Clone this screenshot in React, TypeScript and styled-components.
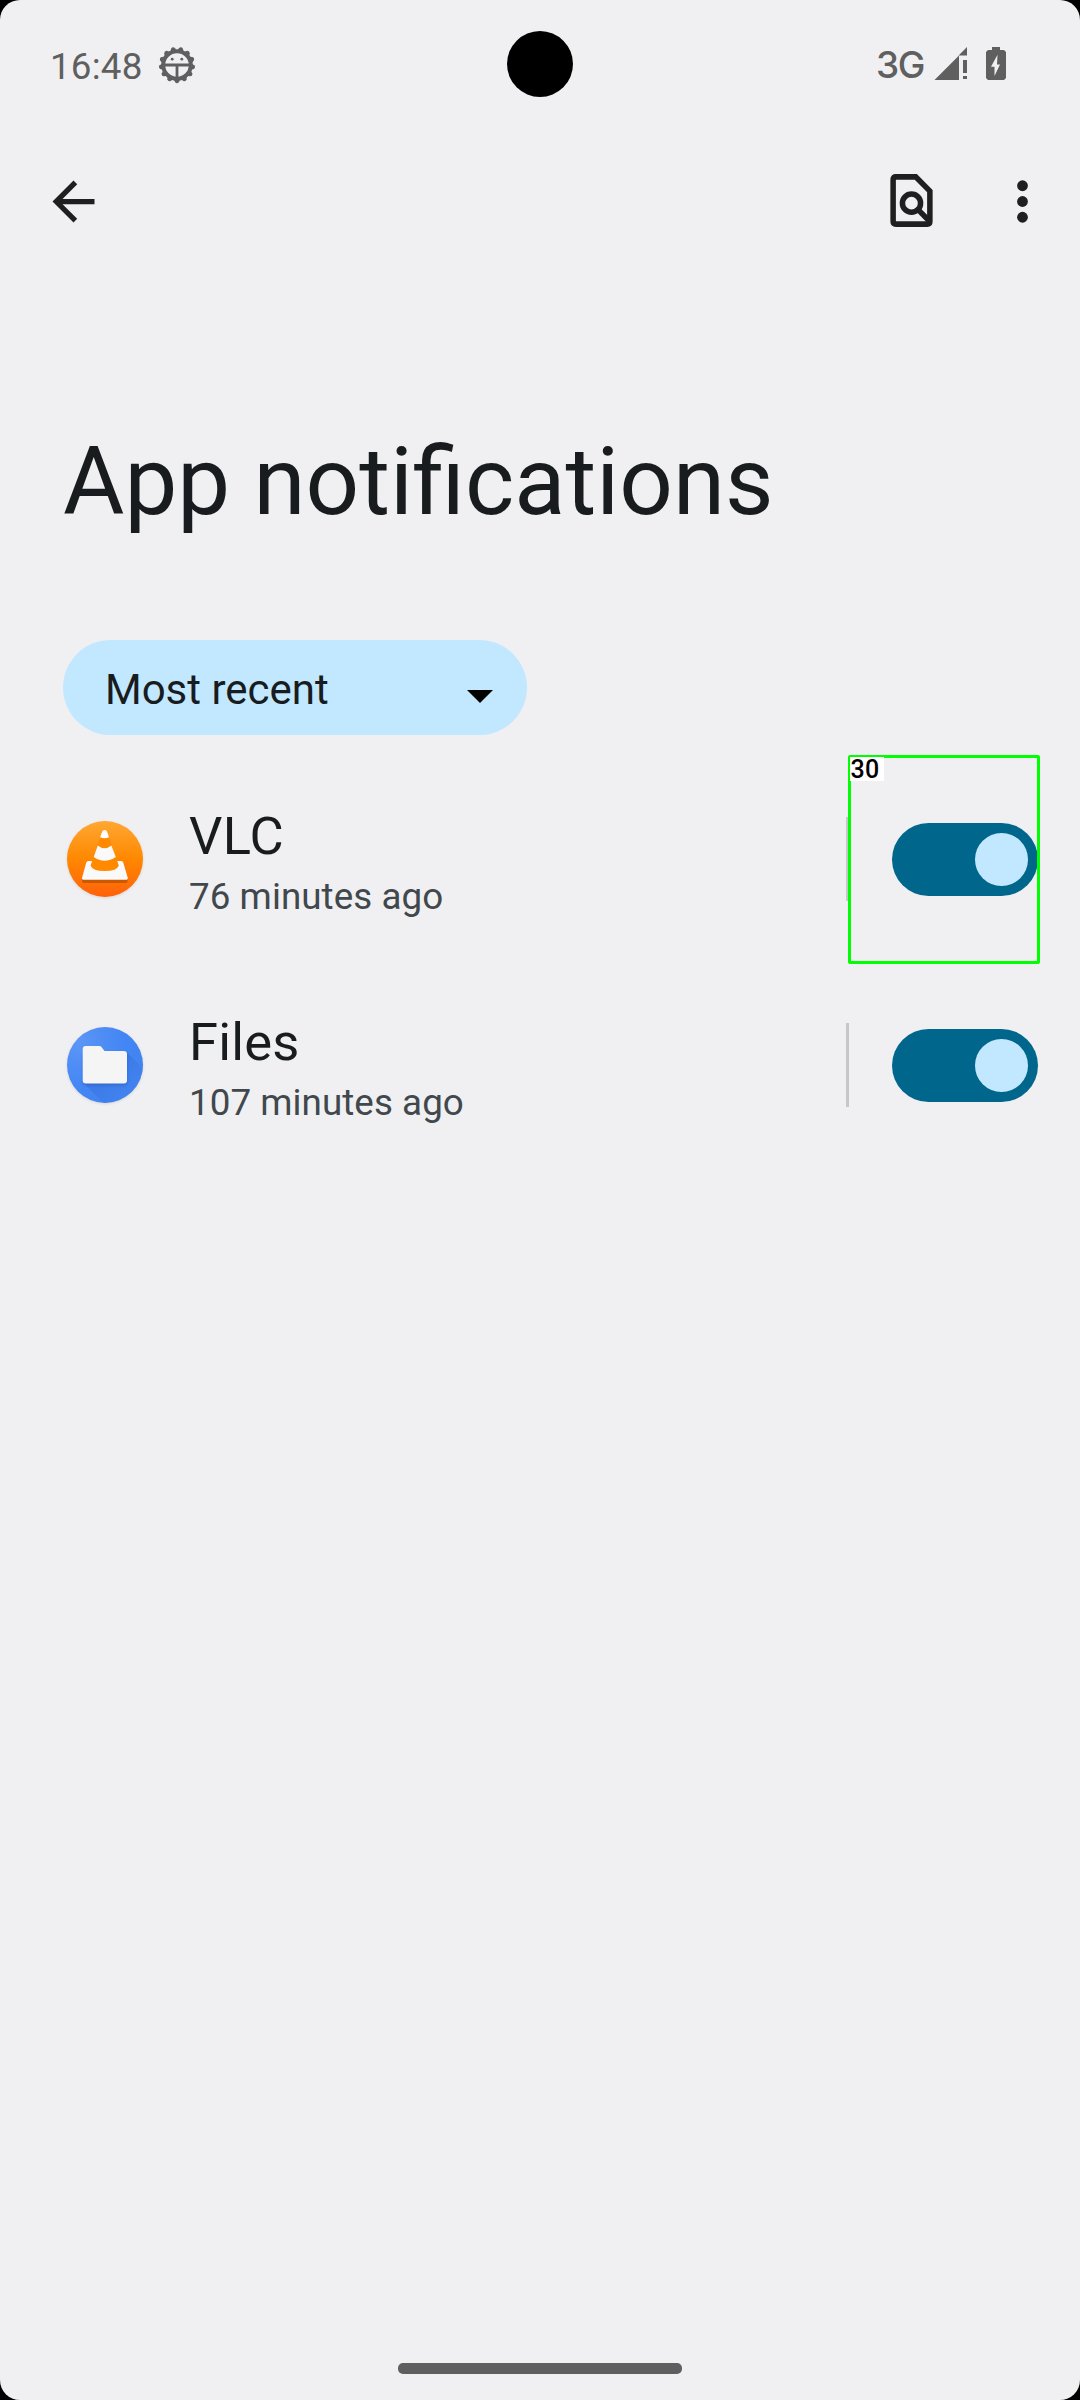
import React, { useState } from "react";
import styled, { createGlobalStyle } from "styled-components";

const GlobalStyle = createGlobalStyle`
  * { box-sizing: border-box; }
  html, body { margin: 0; padding: 0; background: #000; }
  button { border: 0; padding: 0; background: none; font: inherit; color: inherit; }
  svg { display: block; }
`;

const Screen = styled.div`
  position: relative;
  display: flex;
  flex-direction: column;
  width: 1080px;
  height: 2400px;
  border-radius: 20px;
  overflow: hidden;
  background: #f0f0f2;
  color: #191c1e;
  font-family: Roboto, "Noto Sans", sans-serif;
`;

const StatusBar = styled.header`
  display: flex;
  align-items: center;
  height: 127px;
  padding: 0 74px 0 50px;
  color: #5f5f5f;
`;

const Clock = styled.span`
  width: 93px;
  font-size: 36.75px;
  line-height: 44px;
  letter-spacing: 0.2px;
  margin-top: 7px;
`;

const DebugIcon = styled.svg`
  margin: 3px 0 0 15px;
`;

const StatusIcons = styled.div`
  display: flex;
  align-items: center;
  margin-left: auto;
`;

const Network = styled.span`
  font-family: Inter, Roboto, sans-serif;
  font-size: 37px;
  line-height: 45px;
  font-weight: 500;
  letter-spacing: -1.4px;
  margin: 2px 10px 0 0;
`;

const Battery = styled.svg`
  margin-left: 19px;
`;

const Camera = styled.div`
  position: absolute;
  left: 507px;
  top: 31px;
  width: 66px;
  height: 66px;
  border-radius: 50%;
  background: #000;
`;

const Toolbar = styled.nav`
  display: flex;
  align-items: center;
  height: 149px;
  padding: 0 26px 0 42px;
  color: #1f1f1f;
`;

const IconButton = styled.button<{ $push?: boolean; $gap?: number }>`
  width: 63px;
  height: 63px;
  margin-top: ${(p) => (p.$push ? "-2px" : "0")};
  margin-left: ${(p) => (p.$push ? "auto" : `${p.$gap ?? 0}px`)};
`;

const Title = styled.h1`
  margin: 150px 0 0 63px;
  font-size: 94.15px;
  line-height: 112px;
  font-weight: 400;
`;

const Filter = styled.button`
  display: flex;
  align-items: center;
  justify-content: space-between;
  width: 464px;
  height: 95px;
  margin: 102px 0 21px 63px;
  padding: 0 34px 0 42px;
  border-radius: 48px;
  background: #c2e8ff;
  color: #191c1e;
`;

const FilterLabel = styled.span`
  font-size: 42px;
  line-height: 50px;
  margin-top: 5px;
`;

const Caret = styled.svg`
  margin-top: 18px;
`;

const List = styled.ul`
  list-style: none;
  margin: 0;
  padding: 0;
`;

const Row = styled.li`
  position: relative;
  display: flex;
  align-items: center;
  height: 206px;
  padding: 0 42px 0 61px;
`;

const AppIcon = styled.svg`
  width: 88px;
  height: 88px;
  overflow: visible;
`;

const Labels = styled.div`
  display: flex;
  flex-direction: column;
  flex: 1;
  margin-left: 40px;
  padding-top: 4px;
`;

const Name = styled.span`
  font-size: 52.5px;
  line-height: 62px;
  letter-spacing: 0.2px;
`;

const Age = styled.span`
  font-size: 36.75px;
  line-height: 43px;
  letter-spacing: 0.06px;
  margin-top: 8px;
  color: #41484d;
`;

const Divider = styled.div`
  width: 3px;
  height: 84px;
  background: #c7c7c7;
`;

const Track = styled.button<{ $on: boolean }>`
  display: flex;
  align-items: center;
  justify-content: ${(p) => (p.$on ? "flex-end" : "flex-start")};
  width: 146px;
  height: 73px;
  margin: 1px 0 0 43px;
  padding: 0 10px;
  border-radius: 37px;
  background: ${(p) => (p.$on ? "#00668b" : "#dce3e9")};
`;

const Thumb = styled.span`
  width: 53px;
  height: 53px;
  border-radius: 50%;
  background: #c2e8ff;
`;

const Marker = styled.div`
  position: absolute;
  left: 848px;
  top: -1px;
  width: 192px;
  height: 209px;
  border: 3px solid #00ff00;
  border-radius: 2px;
  pointer-events: none;
`;

const MarkerTag = styled.span`
  position: absolute;
  left: -1px;
  top: -1px;
  width: 34px;
  height: 24px;
  padding-left: 0.5px;
  background: #fff;
  color: #000;
  font-size: 25px;
  font-weight: 500;
  line-height: 26px;
  letter-spacing: 0.3px;
`;

const Handle = styled.div`
  width: 284px;
  height: 11px;
  margin: auto auto 26px;
  border-radius: 5px;
  background: #5f5f5f;
`;

const teeth = Array.from({ length: 13 }, (_, i) => 90 + (i * 360) / 13);

const VlcIcon = () => (
  <AppIcon viewBox="-6 -6 88 88">
    <defs>
      <linearGradient id="vlcBg" x1="0" y1="0" x2="0" y2="1">
        <stop offset="0" stopColor="#ffa733" />
        <stop offset="0.5" stopColor="#ff8800" />
        <stop offset="1" stopColor="#ff610a" />
      </linearGradient>
      <filter id="soft" x="-20%" y="-20%" width="140%" height="140%">
        <feGaussianBlur stdDeviation="1.6" />
      </filter>
    </defs>
    <circle cx="38" cy="39" r="38" fill="#000" opacity="0.1" filter="url(#soft)" />
    <circle cx="38" cy="38" r="38" fill="url(#vlcBg)" />
    <path d="M15 58h45.6v2q0 2-2 2H17q-2 0-2-2z" fill="#c95a02" />
    <path d="M21.4 40H54q1.8 0 2.3 1.8L60.8 57q.4 1.8-1.4 1.8H16.4q-1.8 0-1.4-1.8l4.2-15.2q.5-1.8 2.2-1.8z" fill="#fafafa" />
    <path d="M33.4 16 Q37.6 18 41.8 16 L51.8 44.5 Q50 50 37.6 50 Q25.5 50 23.6 44.5z" fill="#ff8a00" />
    <path d="M33.2 16.3 L34.8 11.4 Q35.5 9 37.6 9 Q39.7 9 40.4 11.4 L42 16.3 Q37.6 18 33.2 16.3z" fill="#fff" />
    <path d="M30.8 24.5 Q37.6 30 44.4 24.5 L48.8 36 Q37.6 43.5 26.7 36z" fill="#fafafa" />
  </AppIcon>
);

const FilesIcon = () => (
  <AppIcon viewBox="-6 -6 88 88">
    <defs>
      <radialGradient id="filesBg" cx="0.15" cy="0.2" r="0.9">
        <stop offset="0" stopColor="#5c96f6" />
        <stop offset="0.7" stopColor="#4285f4" />
        <stop offset="1" stopColor="#4285f0" />
      </radialGradient>
      <linearGradient id="cast" x1="0" y1="0" x2="1" y2="1">
        <stop offset="0.4" stopColor="#3b74df" stopOpacity="0.6" />
        <stop offset="0.85" stopColor="#4285f4" stopOpacity="0.1" />
      </linearGradient>
      <clipPath id="disc">
        <circle cx="38" cy="38" r="38" />
      </clipPath>
      <filter id="softFiles" x="-20%" y="-20%" width="140%" height="140%">
        <feGaussianBlur stdDeviation="1.6" />
      </filter>
    </defs>
    <circle cx="38" cy="39" r="38" fill="#000" opacity="0.1" filter="url(#softFiles)" />
    <circle cx="38" cy="38" r="38" fill="url(#filesBg)" />
    <g clipPath="url(#disc)">
      <path d="M59.5 25 L84 49 V90 H50 L16.5 56z" fill="url(#cast)" />
      <rect x="16" y="26" width="44" height="32" rx="3" fill="#1c4ba8" opacity="0.45" filter="url(#softFiles)" />
    </g>
    <path d="M18.7 19H32.5q1.2 0 2 1l3 4H57q3 0 3 3v26.5q0 3-3 3H18.7q-3 0-3-3V22q0-3 3-3z" fill="#f5f5f5" />
  </AppIcon>
);

type Item = { name: string; age: string; icon: React.ReactNode; tag?: string };

const items: Item[] = [
  { name: "VLC", age: "76 minutes ago", icon: <VlcIcon />, tag: "30" },
  { name: "Files", age: "107 minutes ago", icon: <FilesIcon /> },
];

function AppRow({ item }: { item: Item }) {
  const [on, setOn] = useState(true);
  return (
    <Row>
      {item.icon}
      <Labels>
        <Name>{item.name}</Name>
        <Age>{item.age}</Age>
      </Labels>
      <Divider />
      <Track $on={on} role="switch" aria-checked={on} onClick={() => setOn(!on)}>
        <Thumb />
      </Track>
      {item.tag && (
        <Marker>
          <MarkerTag>{item.tag}</MarkerTag>
        </Marker>
      )}
    </Row>
  );
}

export default function App() {
  return (
    <>
      <GlobalStyle />
      <Screen>
        <StatusBar>
          <Clock>16:48</Clock>
          <DebugIcon width="38" height="38" viewBox="-19 -19 38 38">
            {teeth.map((a) => (
              <path key={a} d="M13 -3.8 L17.2 -1.9 Q19.2 0 17.2 1.9 L13 3.8z" fill="#5f5f5f" transform={`rotate(${a})`} />
            ))}
            <circle r="13.8" fill="none" stroke="#5f5f5f" strokeWidth="4" />
            <path d="M-13 0H13M0 0V13" stroke="#5f5f5f" strokeWidth="2.8" />
            <circle cx="-4.8" cy="-5.8" r="1.4" fill="#5f5f5f" />
            <circle cx="4.8" cy="-5.8" r="1.4" fill="#5f5f5f" />
          </DebugIcon>
          <StatusIcons>
            <Network>3G</Network>
            <svg width="33" height="33" viewBox="0 0 33 33" fill="#5f5f5f">
              <path d="M0.5 33 L25 8.5V33zM33 0V8.5H24.5zM29 13h4v13h-4zM29 29h4v3h-4z" />
            </svg>
            <Battery width="20" height="33" viewBox="0 0 20 33">
              <path
                d="M6 0h8v3h4l2 2v26l-2 2H2l-2-2V5l2-2h4zM11.5 7.7 L5 19.7h3.5V29L14 17.5h-3z"
                fill="#5f5f5f"
                fillRule="evenodd"
              />
            </Battery>
          </StatusIcons>
        </StatusBar>
        <Camera />
        <Toolbar>
          <IconButton aria-label="Back">
            <svg width="63" height="63" viewBox="0 0 24 24" fill="currentColor">
              <path d="M20 11H7.83l5.59-5.59L12 4l-8 8 8 8 1.41-1.41L7.83 13H20v-2z" />
            </svg>
          </IconButton>
          <IconButton $push aria-label="Search">
            <svg width="63" height="63" viewBox="0 0 24 24" fill="none" stroke="currentColor" strokeWidth="2.1">
              <path d="M6 3H13.6L19 8.4V20q0 1-1 1H6q-1 0-1-1V4q0-1 1-1z" />
              <circle cx="12" cy="13" r="3.45" />
              <path d="M14.4 15.4L18.6 19.6" />
            </svg>
          </IconButton>
          <IconButton $gap={48} aria-label="More options">
            <svg width="63" height="63" viewBox="0 0 24 24" fill="currentColor">
              <circle cx="12" cy="6" r="2.05" />
              <circle cx="12" cy="12" r="2.05" />
              <circle cx="12" cy="18" r="2.05" />
            </svg>
          </IconButton>
        </Toolbar>
        <Title>App notifications</Title>
        <Filter>
          <FilterLabel>Most recent</FilterLabel>
          <Caret width="26" height="13" viewBox="0 0 26 13">
            <path d="M0 0H26L13 13z" fill="#000" />
          </Caret>
        </Filter>
        <List>
          {items.map((item) => (
            <AppRow key={item.name} item={item} />
          ))}
        </List>
        <Handle />
      </Screen>
    </>
  );
}
